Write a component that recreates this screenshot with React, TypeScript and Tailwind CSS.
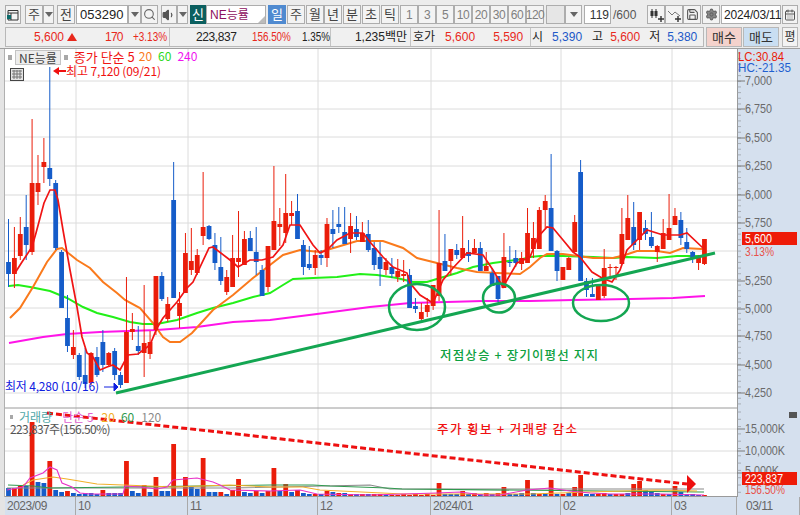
import React from "react";
import { Search, Settings, Save, CalendarDays, Volume1 } from "lucide-react";

const FONT = '"Liberation Sans","Noto Sans CJK KR",sans-serif';
const KR = '"Noto Sans CJK KR","Liberation Sans",sans-serif';
const RED = "#ea1d0a";
const BLUE = "#155cc9";

// [wickTop, bodyTop, bodyBottom, wickBottom, colour 0 red / 1 blue]
const C: number[][] = [
  [219,262,274,287,1],[227,258,274,288,0],[217,234,256,260,0],[195,227,245,260,1],[119,183,252,255,0],
  [155,183,192,205,0],[138,162,167,183,0],[67,168,179,186,1],[180,183,248,250,1],[250,252,308,308,1],
  [295,318,346,352,1],[330,347,355,359,0],[353,355,377,380,1],[348,375,384,388,1],[352,353,383,385,0],
  [347,357,375,377,1],[330,342,365,372,1],[352,353,365,367,0],[348,351,375,380,1],[372,375,385,388,1],
  [277,332,383,383,0],[313,329,332,340,0],[326,346,351,355,1],[285,343,353,377,0],[331,342,354,359,0],
  [276,276,330,335,0],[272,276,299,301,1],[297,304,319,322,0],[162,200,298,298,1],[292,303,316,328,0],
  [233,253,293,293,0],[228,261,270,275,0],[249,255,273,275,0],[172,227,236,245,0],[225,226,239,240,1],
  [233,245,263,270,1],[237,267,281,285,1],[270,277,292,295,0],[235,258,287,287,0],[211,258,262,277,0],
  [231,239,265,265,0],[231,238,251,251,1],[227,252,262,275,1],[265,270,296,296,1],[246,246,287,292,0],
  [166,221,250,250,0],[208,224,227,246,0],[174,213,233,243,0],[201,213,216,225,0],[194,211,239,239,1],
  [240,245,267,275,1],[246,264,268,270,1],[250,255,268,275,0],[250,255,258,265,1],[218,224,258,267,0],
  [210,229,234,248,1],[207,224,227,233,1],[207,232,244,244,1],[213,226,239,253,0],[216,229,237,240,1],
  [222,233,242,242,0],[220,234,250,252,1],[242,248,265,270,1],[242,257,269,286,1],[258,262,270,275,0],
  [258,267,274,278,1],[259,271,277,282,0],[260,274,276,282,0],[269,275,308,308,1],[298,306,309,313,1],
  [303,312,319,320,0],[298,305,312,317,0],[285,285,306,310,0],[210,263,296,301,0],[234,261,271,271,1],
  [249,249,261,275,0],[244,250,255,259,1],[216,248,258,258,0],[240,252,256,262,1],[239,248,253,253,0],
  [242,248,271,271,1],[252,266,271,271,0],[268,273,286,286,1],[276,276,299,302,1],[233,257,288,288,0],
  [246,262,263,267,1],[250,258,263,267,1],[252,258,264,270,0],[208,233,263,263,0],[222,238,249,258,0],
  [207,210,249,249,0],[195,201,210,228,0],[154,208,251,251,1],[250,251,271,281,1],[267,267,280,280,0],
  [257,258,270,270,0],[215,222,252,252,0],[160,172,281,281,1],[278,281,290,297,1],[278,294,297,297,1],
  [286,286,300,300,0],[249,268,296,298,0],[264,267,268,277,0],[266,267,268,280,0],[208,234,264,264,0],
  [195,218,240,240,0],[202,227,245,250,1],[212,212,240,250,0],[220,228,234,240,1],[212,237,246,248,1],
  [245,246,252,262,0],[219,233,249,249,0],[194,228,240,240,0],[208,216,225,225,0],[212,220,238,245,1],
  [228,242,249,253,1],[251,252,258,263,1],[255,256,263,270,0],[239,239,264,265,0],
];

// top of each volume bar, + = red, - = blue
const V = [
  -488,488,486,-486,422,-482,-483,461,-490,-492,491,-493,-494,-493,-493,-494,490,-493,-493,-493,
  461,-491,-493,485,-492,477,-491,-491,444,-491,477,-487,-489,458,-492,-492,492,-494,490,479,
  -492,-493,491,-493,491,468,-491,484,-492,490,-493,-494,494,-494,491,-492,493,-493,494,-494,
  494,-494,494,494,-495,495,495,494,495,494,495,494,495,483,-494,-494,-494,491,-494,493,
  -494,493,-494,493,487,-494,-494,-493,480,-493,494,-493,480,-494,494,-493,487,475,-494,-494,
  494,493,-494,494,494,-493,484,481,-490,-492,-493,494,-494,486,-492,-494,-494,-495,495,
];

const px = (i: number) => 8.5 + 5.898 * i;
const MA5 = "15,273 22,262 32,247 36,233 44,203 50,190 55,190 58,200 63,230 70,270 77,307 82,337 87,353 93,357 100,370 107,367 113,365 120,370 128,355 138,354 150,345 157,328 163,318 177,302 187,288 193,282 209,248 213,247 230,260 238,267 250,260 262,260 273,257 283,245 290,225 300,225 313,245 320,253 327,250 337,240 350,233 363,233 370,242 383,257 393,267 407,273 410,283 420,295 433,303 443,280 453,268 467,253 483,255 493,270 503,287 517,263 530,257 538,237 547,227 553,228 563,240 573,252 580,257 592,272 602,278 612,282 620,270 627,250 637,240 647,230 663,235 680,235 687,233 703,248";
const MA20 = "10,318 20,308 33,287 47,262 57,249 62,248 77,260 90,268 103,282 117,293 125,300 140,308 153,323 163,337 170,342 180,342 192,333 213,310 233,295 253,278 270,265 283,255 300,250 320,252 337,247 357,241 383,241 403,248 417,258 437,263 457,268 477,272 497,273 520,274 530,267 540,258 547,254 563,254 593,258 613,258 625,255 637,251 657,251 670,253 683,248 702,249";
const MA60 = "9,286 18,285 30,287 50,291 67,298 83,307 97,313 113,317 130,322 143,324 157,324 177,320 197,313 213,308 233,303 253,297 270,293 283,285 293,279 313,278 337,277 360,274 377,275 397,278 413,282 427,282 440,278 457,273 473,267 493,263 523,259 530,257 540,256 563,256 593,257 613,258 627,257 657,258 677,256 702,256";
const MA240 = "9,343 43,337 67,334 100,332 157,330 197,327 233,322 270,320 317,314 370,307 410,303 483,301 530,301 573,300 630,299 673,298 705,296";
const VM5 = "7,490 23,487 30,478 43,473 50,467 57,470 62,483 72,487 80,493 90,494 123,494 125,486 140,487 157,489 167,487 173,480 197,478 213,482 220,485 230,490 270,491 300,490 317,494 370,495 437,493 460,492 483,495 500,495 527,490 550,488 570,491 590,493 610,494 660,494 704,495";
const VM20 = "23,485 33,480 53,477 67,479 97,484 123,485 150,486 173,487 230,485 270,487 303,487 320,490 403,494 530,494 590,492 657,490 697,491";
const VM60 = "8,485 33,486 50,488 123,487 270,485 313,485 330,486 387,488 402,489 700,492 704,492";
const VM120 = "7,488 230,488 370,485 390,489 704,489";

const Ticks = ({ from, to, step }: { from: number; to: number; step: number }) => {
  const n = Math.floor((to - from) / step);
  return (
    <>
      {Array.from({ length: n + 1 }, (_, k) => (
        <line key={k} x1={737} x2={741} y1={from + k * step} y2={from + k * step} stroke="#9aa0a6" strokeWidth={0.8} />
      ))}
    </>
  );
};

const Plot = () => {
  const hLines = [81, 109, 137, 166, 195, 223, 251, 280, 308, 336, 364, 393];
  const vLines = [76, 188, 318, 431, 561, 672];
  return (
    <svg viewBox="5 49 732 448" width={732} height={448} className="block" style={{ fontFamily: KR }}>
      <rect x={5} y={49} width={732} height={448} fill="#fff" />
      {hLines.map((y) => (
        <line key={y} x1={5} x2={737} y1={y} y2={y} stroke={y === 195 || y === 280 ? "#e6e6e6" : "#dcdcdc"} strokeWidth={y === 195 || y === 280 ? 1.5 : 1} />
      ))}
      {[429, 451, 473].map((y) => (
        <line key={y} x1={5} x2={737} y1={y} y2={y} stroke="#dcdcdc" strokeWidth={1} />
      ))}
      {vLines.map((x) => (
        <line key={x} x1={x} x2={x} y1={49} y2={496} stroke="#dcdcdc" strokeWidth={1} />
      ))}
      <line x1={5} x2={737} y1={408} y2={408} stroke="#9a9a9a" strokeWidth={1} />
      <line x1={5} x2={737} y1={496.5} y2={496.5} stroke="#9a9a9a" strokeWidth={1} />

      <polyline points={MA240} fill="none" stroke="#ff14e8" strokeWidth={2} />
      <polyline points={MA60} fill="none" stroke="#22f018" strokeWidth={2} />
      <polyline points={MA20} fill="none" stroke="#fa7a1c" strokeWidth={2} />

      {C.map(([wt, t, b, wb, c], i) => {
        const col = c ? BLUE : RED;
        const x = px(i);
        return (
          <g key={i}>
            <line x1={x} x2={x} y1={wt} y2={wb} stroke={col} strokeWidth={1} />
            <rect x={x - 2.4} y={t} width={4.8} height={Math.max(b - t, 1)} fill={col} />
          </g>
        );
      })}
      <polyline points={MA5} fill="none" stroke="#f01414" strokeWidth={1.7} />

      <line x1={116} y1={393} x2={715} y2={253} stroke="#14a652" strokeWidth={3} />
      <ellipse cx={417} cy={307} rx={28} ry={23} fill="none" stroke="#14a652" strokeWidth={2.5} />
      <ellipse cx={499} cy={298} rx={16} ry={14.5} fill="none" stroke="#14a652" strokeWidth={2.5} />
      <ellipse cx={601} cy={303} rx={28} ry={18} fill="none" stroke="#14a652" strokeWidth={2.5} />

      <path d="M53 71 L59 67 L59 70 L66 70 L66 72 L59 72 L59 75 Z" fill="#f01010" />
      <text x={66} y={76} fontSize={12} fill="#f01010" textLength={95}>최고 7,120 (09/21)</text>
      <text x={5} y={391} fontSize={12} fill="#1020e0" textLength={94}>최저 4,280 (10/16)</text>
      <path d="M104 387 L114 387 M114 383 L118 387 L114 391 Z" stroke="#1020e0" strokeWidth={1} fill="#1020e0" />

      <text x={440} y={360} fontSize={12.5} fontWeight={500} fill="#0da040" textLength={158}>저점상승 + 장기이평선 지지</text>
      <text x={437} y={434} fontSize={12.5} fontWeight={500} fill="#f01010" textLength={140}>주가 횡보 + 거래량 감소</text>

      {V.map((v, i) => {
        const top = Math.abs(v);
        return <rect key={i} x={px(i) - 2.4} y={top} width={4.8} height={496 - top} fill={v < 0 ? BLUE : RED} />;
      })}
      <polyline points={VM120} fill="none" stroke="#8a8a8a" strokeWidth={1.1} />
      <polyline points={VM60} fill="none" stroke="#2f9a4e" strokeWidth={1.1} />
      <polyline points={VM20} fill="none" stroke="#f2b02a" strokeWidth={1.1} />
      <polyline points={VM5} fill="none" stroke="#e832c8" strokeWidth={1.1} />

      <line x1={47} y1={413} x2={687} y2={484} stroke="#ee0f0f" strokeWidth={3} strokeDasharray="6 3" />
      <path d="M687 475 L696 484 L687 493 Z" fill="#ee0f0f" />
    </svg>
  );
};

const AxisText = ({ y, w, children }: { y: number; w: number; children: string }) => (
  <text x={745} y={y + 5} fontSize={13.5} fill="#6a6a6a" textLength={w} lengthAdjust="spacingAndGlyphs">{children}</text>
);

const Axis = () => {
  const labels: [number, string][] = [
    [80, "7,000"], [108, "6,750"], [137, "6,500"], [165, "6,250"], [194, "6,000"], [222, "5,750"],
    [280, "5,250"], [308, "5,000"], [335, "4,750"], [364, "4,500"], [392, "4,250"],
  ];
  return (
    <svg viewBox="737 49 63 448" width={63} height={448} className="block" style={{ fontFamily: FONT }}>
      <rect x={737} y={49} width={63} height={448} fill="#d5e0ee" />
      <line x1={737.5} x2={737.5} y1={49} y2={497} stroke="#9a9a9a" strokeWidth={1} />
      <Ticks from={53} to={405} step={5.66} />
      <Ticks from={412} to={495} step={7.3} />
      {labels.map(([y]) => <line key={y} x1={737} x2={745} y1={y + 1} y2={y + 1} stroke="#7a7a7a" strokeWidth={1} />)}
      {[429, 451, 473].map((y) => <line key={y} x1={737} x2={745} y1={y} y2={y} stroke="#7a7a7a" strokeWidth={1} />)}
      <text x={738} y={61} fontSize={13} fill="#ea1d0a" textLength={46} lengthAdjust="spacingAndGlyphs">LC:30.84</text>
      <text x={738} y={72} fontSize={13} fill="#1f5fd0" textLength={53} lengthAdjust="spacingAndGlyphs">HC:-21.35</text>
      {labels.map(([y, t]) => <AxisText key={t} y={y} w={27}>{t}</AxisText>)}
      <rect x={742} y={232} width={55} height={13} fill="#ee1b08" />
      <text x={745} y={243} fontSize={13.5} fill="#fff" textLength={27} lengthAdjust="spacingAndGlyphs">5,600</text>
      <text x={745} y={256} fontSize={13.5} fill="#e8504a" textLength={29} lengthAdjust="spacingAndGlyphs">3.13%</text>
      <rect x={789} y={412} width={8} height={6} fill="#555" />
      <AxisText y={428} w={40}>15,000K</AxisText>
      <AxisText y={450} w={40}>10,000K</AxisText>
      <AxisText y={470} w={34}>5,000K</AxisText>
      <rect x={742} y={472} width={55} height={13} fill="#ee1b08" />
      <text x={745} y={483} fontSize={13.5} fill="#fff" textLength={38} lengthAdjust="spacingAndGlyphs">223,837</text>
      <text x={745} y={494} fontSize={13.5} fill="#e8504a" textLength={40} lengthAdjust="spacingAndGlyphs">156.50%</text>
    </svg>
  );
};

const Btn = ({ w, ml = 0, children, cls = "" }: { w: string; ml?: number; children?: React.ReactNode; cls?: string }) => (
  <div className={`flex items-center justify-center h-full shrink-0 border border-[#adadad] bg-[#f3f3f3] text-[#444] ${w} ${cls}`} style={ml ? { marginLeft: ml } : undefined}>
    {children}
  </div>
);

const Caret = () => <span className="w-0 h-0 border-l-[4px] border-r-[4px] border-t-[5px] border-l-transparent border-r-transparent border-t-[#666]" />;

const CandleIcon = ({ line }: { line?: boolean }) => (
  <svg width={15} height={14} viewBox="0 0 15 14">
    {line ? (
      <>
        <path d="M1 3 L5 7 L8 4 L13 8" fill="none" stroke="#777" strokeWidth={1} />
        <path d="M8 11 H14 M11 8 V14" stroke="#333" strokeWidth={1.4} />
      </>
    ) : (
      <>
        <path d="M3 1 V10 M7 1 V10" stroke="#333" strokeWidth={1} />
        <rect x={1.5} y={3} width={3} height={5} fill="#333" />
        <rect x={5.5} y={3} width={3} height={5} fill="#333" />
        <path d="M9 11 H15 M12 8 V14" stroke="#333" strokeWidth={1.4} />
      </>
    )}
  </svg>
);

const Toolbar = () => (
  <div className="flex h-[19px] mt-[5px] pl-[5px] text-[13px] leading-none">
    <Btn w="w-[16px]">
      <svg width={12} height={12} viewBox="0 0 12 12">
        <path d="M1 1.5 H11 V11 H1 Z M1 4 H11 M4 4 V11" fill="none" stroke="#333" strokeWidth={1} />
        <path d="M0 6 L4 6 V10 L0 10 Z" fill="#0b6a6a" />
      </svg>
    </Btn>
    <Btn w="w-[18px]" ml={4}>주</Btn>
    <Btn w="w-[11px]"><Caret /></Btn>
    <Btn w="w-[18px]" ml={3}>전</Btn>
    <div className="flex items-center w-[52px] h-full ml-px pl-[3px] bg-white border border-[#adadad] text-[#222] text-[13px]">053290</div>
    <Btn w="w-[13px]"><Caret /></Btn>
    <Btn w="w-[17px]"><Search size={13} color="#666" strokeWidth={2} /></Btn>
    <Btn w="w-[16px]" ml={3}><Volume1 size={14} color="#555" fill="#555" /></Btn>
    <Btn w="w-[11px]"><Caret /></Btn>
    <div className="flex items-center justify-center w-[16px] h-full ml-[2px] bg-[#0b5f5f] text-white text-[13px]">신</div>
    <div className="relative flex items-center w-[60px] h-full pl-[3px] bg-white border border-[#adadad] text-[#8e1060] text-[12px]">
      NE능률
      <span className="absolute right-0 bottom-0 w-0 h-0 border-l-[7px] border-b-[7px] border-l-transparent border-b-[#bbb]" />
    </div>
    <div className="flex items-center justify-center w-[18px] h-full ml-[2px] bg-[#4f8ad0] text-white">일</div>
    <Btn w="w-[18px]" ml={1}>주</Btn>
    <Btn w="w-[18px]" ml={1}>월</Btn>
    <Btn w="w-[18px]">년</Btn>
    <Btn w="w-[18px]" ml={1}>분</Btn>
    <Btn w="w-[18px]" ml={1}>초</Btn>
    <Btn w="w-[18px]" ml={1}>틱</Btn>
    <div className="flex h-full ml-[1px] text-[12px] text-[#777]">
      {["1", "3", "5", "10", "20", "30", "60", "120"].map((t) => (
        <Btn key={t} w="w-[18px]" cls="!text-[#808080] tracking-[-0.5px]">{t}</Btn>
      ))}
    </div>
    <Btn w="w-[19px]" ml={2} cls="!bg-[#e6e6e6]" />
    <Btn w="w-[17px]"><Caret /></Btn>
    <div className="flex items-center justify-end w-[27px] h-full ml-[2px] pr-[1px] bg-white border border-[#adadad] text-[#333] text-[12px]">119</div>
    <div className="flex items-center w-[36px] h-full pl-[2px] text-[#555] text-[12px]">/600</div>
    <Btn w="w-[18px]"><CandleIcon /></Btn>
    <Btn w="w-[18px]"><CandleIcon line /></Btn>
    <Btn w="w-[18px]"><Save size={13} color="#555" /></Btn>
    <Btn w="w-[18px]" ml={1}><Settings size={13} color="#666" fill="#888" /></Btn>
    <div className="flex items-center w-[60px] h-full ml-[1px] pl-[2px] bg-white border border-[#adadad] text-[#222] text-[12px] tracking-[-0.2px]">2024/03/11</div>
    <Btn w="w-[16px]" ml={1}><CalendarDays size={12} color="#555" /></Btn>
  </div>
);

const InfoRow = () => (
  <div className="flex h-[20px] mt-[3px] text-[12px] leading-none items-stretch">
    <div className="flex ml-[5px] w-[699px] border border-[#b8b8b8] bg-[#f0f0f0] text-[#222]">
      <div className="flex items-center w-[164px] border-r border-[#c4c4c4] text-[#e8281c]">
        <span className="ml-[28px]">5,600</span>
        <span className="ml-[3px] w-0 h-0 border-l-[5px] border-r-[5px] border-b-[8px] border-l-transparent border-r-transparent border-b-[#e8281c]" />
        <span className="ml-[28px] tracking-[-0.8px]">170</span>
        <span className="ml-[10px] inline-block w-[34px] origin-left scale-x-[0.83] whitespace-nowrap">+3.13%</span>
      </div>
      <div className="flex items-center w-[161px] border-r border-[#c4c4c4]">
        <span className="ml-[26px] tracking-[-0.4px]">223,837</span>
        <span className="ml-[15px] inline-block w-[39px] origin-left scale-x-[0.82] whitespace-nowrap text-[#e8281c]">156.50%</span>
        <span className="ml-[11px] inline-block w-[28px] origin-left scale-x-[0.82] whitespace-nowrap">1.35%</span>
      </div>
      <div className="flex items-center w-[80px] justify-end border-r border-[#c4c4c4] pr-[3px]">1,235백만</div>
      <div className="flex items-center w-[120px] border-r border-[#c4c4c4]">
        <span className="ml-[2px]">호가</span>
        <span className="ml-[10px] text-[#e8281c]">5,600</span>
        <span className="ml-[18px] text-[#e8281c]">5,590</span>
      </div>
      <div className="flex items-center flex-1">
        <span className="ml-[1px]">시</span>
        <span className="ml-[9px] text-[#2259c8]">5,390</span>
        <span className="ml-[10px]">고</span>
        <span className="ml-[7px] text-[#e8281c]">5,600</span>
        <span className="ml-[9px]">저</span>
        <span className="ml-[7px] text-[#2259c8]">5,380</span>
      </div>
    </div>
    <div className="flex items-center justify-center w-[36px] ml-[2px] bg-[#f4d2cc] border border-[#b8b8b8] text-[#333] text-[13px]">매수</div>
    <div className="flex items-center justify-center w-[36px] ml-[1px] bg-[#c9def2] border border-[#b8b8b8] text-[#333] text-[13px]">매도</div>
    <div className="flex items-center justify-center w-[16px] ml-[3px] bg-[#f3f3f3] border border-[#b8b8b8] text-[#333]">평</div>
  </div>
);

const DateAxis = () => {
  const cells: [string, string][] = [
    ["w-[71px]", "2023/09"], ["w-[112px]", "10"], ["w-[130px]", "11"], ["w-[113px]", "12"],
    ["w-[130px]", "2024/01"], ["w-[111px]", "02"], ["w-[65px]", "03"], ["flex-1", "03/11"],
  ];
  return (
    <div className="flex h-[18px] bg-[#d5e0ee] text-[12px] tracking-[-0.5px] text-[#666] leading-none">
      <div className="w-[5px] bg-[#e4e4e4]" />
      {cells.map(([w, t], i) => (
        <div key={t} className={`flex items-center ${i === 7 ? "pl-[9px]" : "pl-[2px]"} ${w} border-r border-[#a9a9a9]`}>{t}</div>
      ))}
    </div>
  );
};

export default function App() {
  return (
    <div className="w-[800px] h-[515px] overflow-hidden bg-[#ececec]" style={{ fontFamily: FONT }}>
      <Toolbar />
      <InfoRow />
      <div className="h-px" />
      <div className="h-px bg-[#a0a0a0]" />
      <div className="relative flex h-[448px]">
        <div className="w-[5px] bg-[#e4e4e4] border-r border-[#b0b0b0]" />
        <Plot />
        <Axis />
        <div className="absolute left-[8px] top-[1px] flex items-center h-[15px] text-[12px] leading-none" style={{ fontFamily: KR }}>
          <span className="w-[4px] h-[5px] bg-[#a8a8a8] mr-[3px]" />
          <span className="flex items-center h-[15px] px-[3px] bg-[#ededed] border border-[#c4c4c4] text-[#444]">NE능률</span>
          <span className="w-[4px] h-[5px] bg-[#a8a8a8] ml-[3px] mr-[6px]" />
          <span className="mb-[3px] text-[#f01414] text-[13px]">종가 단순 5</span>
          <span className="mb-[3px] ml-[4px] text-[#fa7a1c]">20</span>
          <span className="mb-[3px] ml-[6px] text-[#2bd81a]">60</span>
          <span className="mb-[3px] ml-[6px] text-[#f014f0]">240</span>
        </div>
        <div className="absolute left-[10px] top-[19px] flex items-center justify-center w-[14px] h-[13px] bg-[#e4e4e4] border border-[#444]">
          <svg width={10} height={9} viewBox="0 0 10 9">
            <path d="M0 1H10M0 4H10M0 7H10M2 0V9M5 0V9M8 0V9" stroke="#777" strokeWidth={1} />
          </svg>
        </div>
        <div className="absolute left-[10px] top-[361px] flex items-center h-[14px] text-[12px] leading-none" style={{ fontFamily: KR }}>
          <span className="w-[3px] h-[4px] bg-[#a8a8a8] mr-[6px]" />
          <span className="text-[#4fa7a7]">거래량</span>
          <span className="ml-[10px] text-[#e05fd0]">단순 5</span>
          <span className="ml-[8px] text-[#f2b02a]">20</span>
          <span className="ml-[6px] text-[#2f9a4e]">60</span>
          <span className="ml-[7px] text-[#8a8a8a]">120</span>
        </div>
        <div className="absolute left-[10px] top-[374px] text-[12px] leading-none tracking-[-0.6px] text-[#555]" style={{ fontFamily: KR }}>223,837주(156.50%)</div>
      </div>
      <DateAxis />
    </div>
  );
}
